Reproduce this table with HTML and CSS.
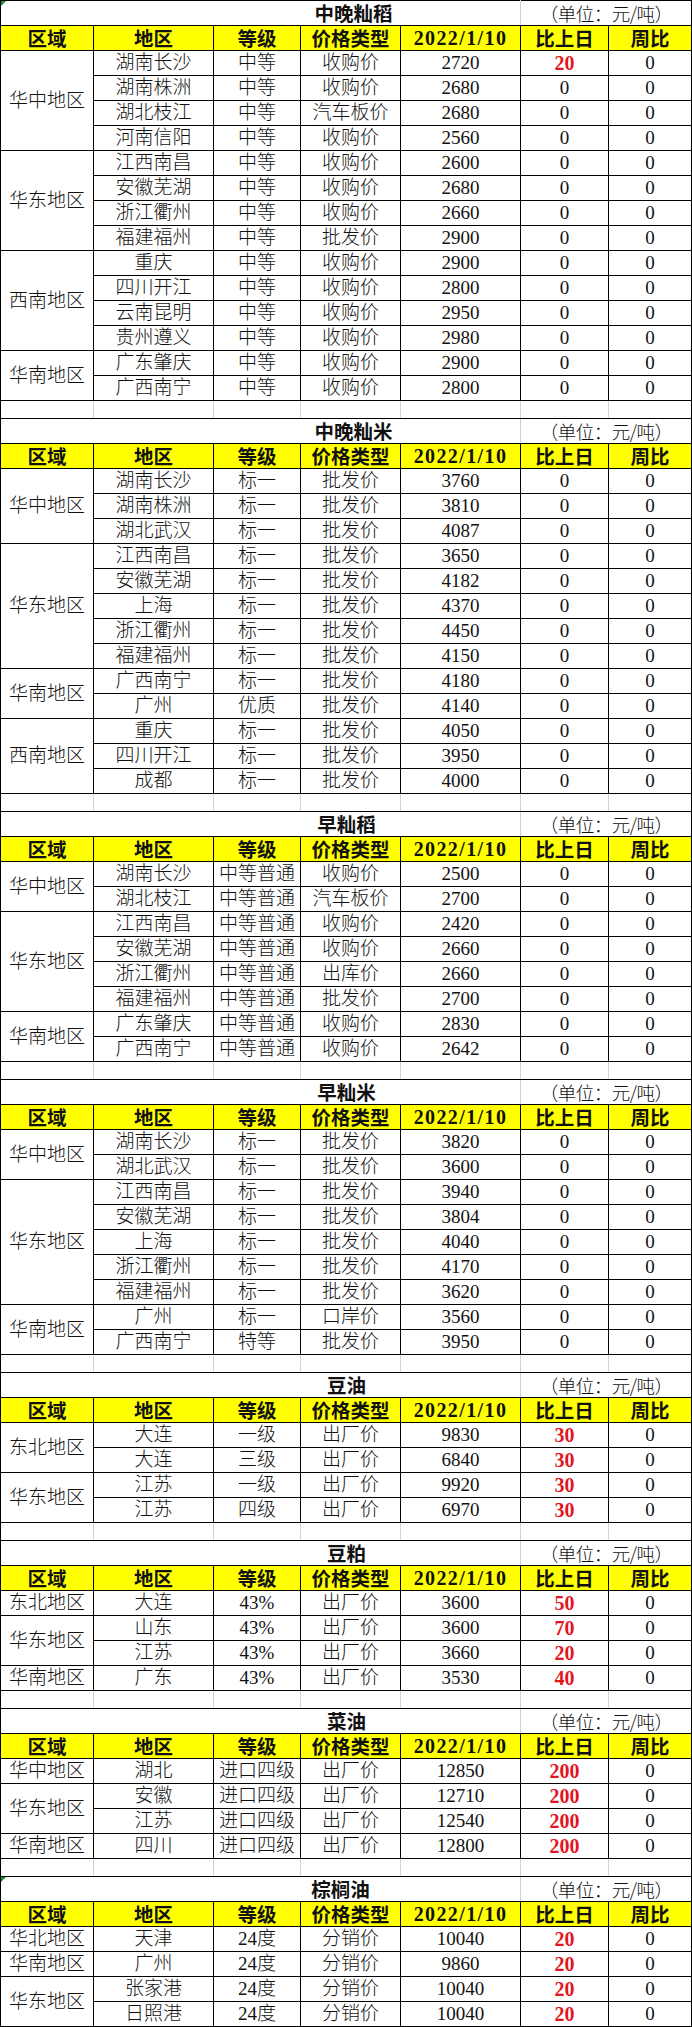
FILE: index.html
```html
<!DOCTYPE html>
<html lang="zh-CN">
<head>
<meta charset="utf-8">
<title>价格表</title>
<link rel="stylesheet" href="styles.css">
</head>
<body>
<table class="sheet">
<colgroup>
<col class="c1"><col class="c2"><col class="c3"><col class="c4"><col class="c5"><col class="c6"><col class="c7">
</colgroup>

<tbody>
<tr class="title"><td colspan="5" class="ttl ttl-wide flag">中晚籼稻</td><td colspan="2" class="unit">（单位：元/吨）</td></tr>
<tr class="hd"><td>区域</td><td>地区</td><td>等级</td><td>价格类型</td><td class="num">2022/1/10</td><td>比上日</td><td>周比</td></tr>
<tr><td rowspan="4">华中地区</td><td>湖南长沙</td><td>中等</td><td>收购价</td><td>2720</td><td class="r">20</td><td>0</td></tr>
<tr><td>湖南株洲</td><td>中等</td><td>收购价</td><td>2680</td><td>0</td><td>0</td></tr>
<tr><td>湖北枝江</td><td>中等</td><td>汽车板价</td><td>2680</td><td>0</td><td>0</td></tr>
<tr><td>河南信阳</td><td>中等</td><td>收购价</td><td>2560</td><td>0</td><td>0</td></tr>
<tr><td rowspan="4">华东地区</td><td>江西南昌</td><td>中等</td><td>收购价</td><td>2600</td><td>0</td><td>0</td></tr>
<tr><td>安徽芜湖</td><td>中等</td><td>收购价</td><td>2680</td><td>0</td><td>0</td></tr>
<tr><td>浙江衢州</td><td>中等</td><td>收购价</td><td>2660</td><td>0</td><td>0</td></tr>
<tr><td>福建福州</td><td>中等</td><td>批发价</td><td>2900</td><td>0</td><td>0</td></tr>
<tr><td rowspan="4">西南地区</td><td>重庆</td><td>中等</td><td>收购价</td><td>2900</td><td>0</td><td>0</td></tr>
<tr><td>四川开江</td><td>中等</td><td>收购价</td><td>2800</td><td>0</td><td>0</td></tr>
<tr><td>云南昆明</td><td>中等</td><td>收购价</td><td>2950</td><td>0</td><td>0</td></tr>
<tr><td>贵州遵义</td><td>中等</td><td>收购价</td><td>2980</td><td>0</td><td>0</td></tr>
<tr><td rowspan="2">华南地区</td><td>广东肇庆</td><td>中等</td><td>收购价</td><td>2900</td><td>0</td><td>0</td></tr>
<tr><td>广西南宁</td><td>中等</td><td>收购价</td><td>2800</td><td>0</td><td>0</td></tr>
<tr class="gap"><td></td><td></td><td></td><td></td><td></td><td></td><td></td></tr>
</tbody>

<tbody>
<tr class="title"><td colspan="5" class="ttl ttl-wide">中晚籼米</td><td colspan="2" class="unit">（单位：元/吨）</td></tr>
<tr class="hd"><td>区域</td><td>地区</td><td>等级</td><td>价格类型</td><td class="num">2022/1/10</td><td>比上日</td><td>周比</td></tr>
<tr><td rowspan="3">华中地区</td><td>湖南长沙</td><td>标一</td><td>批发价</td><td>3760</td><td>0</td><td>0</td></tr>
<tr><td>湖南株洲</td><td>标一</td><td>批发价</td><td>3810</td><td>0</td><td>0</td></tr>
<tr><td>湖北武汉</td><td>标一</td><td>批发价</td><td>4087</td><td>0</td><td>0</td></tr>
<tr><td rowspan="5">华东地区</td><td>江西南昌</td><td>标一</td><td>批发价</td><td>3650</td><td>0</td><td>0</td></tr>
<tr><td>安徽芜湖</td><td>标一</td><td>批发价</td><td>4182</td><td>0</td><td>0</td></tr>
<tr><td>上海</td><td>标一</td><td>批发价</td><td>4370</td><td>0</td><td>0</td></tr>
<tr><td>浙江衢州</td><td>标一</td><td>批发价</td><td>4450</td><td>0</td><td>0</td></tr>
<tr><td>福建福州</td><td>标一</td><td>批发价</td><td>4150</td><td>0</td><td>0</td></tr>
<tr><td rowspan="2">华南地区</td><td>广西南宁</td><td>标一</td><td>批发价</td><td>4180</td><td>0</td><td>0</td></tr>
<tr><td>广州</td><td>优质</td><td>批发价</td><td>4140</td><td>0</td><td>0</td></tr>
<tr><td rowspan="3">西南地区</td><td>重庆</td><td>标一</td><td>批发价</td><td>4050</td><td>0</td><td>0</td></tr>
<tr><td>四川开江</td><td>标一</td><td>批发价</td><td>3950</td><td>0</td><td>0</td></tr>
<tr><td>成都</td><td>标一</td><td>批发价</td><td>4000</td><td>0</td><td>0</td></tr>
<tr class="gap"><td></td><td></td><td></td><td></td><td></td><td></td><td></td></tr>
</tbody>

<tbody>
<tr class="title"><td colspan="5" class="ttl">早籼稻</td><td colspan="2" class="unit">（单位：元/吨）</td></tr>
<tr class="hd"><td>区域</td><td>地区</td><td>等级</td><td>价格类型</td><td class="num">2022/1/10</td><td>比上日</td><td>周比</td></tr>
<tr><td rowspan="2">华中地区</td><td>湖南长沙</td><td>中等普通</td><td>收购价</td><td>2500</td><td>0</td><td>0</td></tr>
<tr><td>湖北枝江</td><td>中等普通</td><td>汽车板价</td><td>2700</td><td>0</td><td>0</td></tr>
<tr><td rowspan="4">华东地区</td><td>江西南昌</td><td>中等普通</td><td>收购价</td><td>2420</td><td>0</td><td>0</td></tr>
<tr><td>安徽芜湖</td><td>中等普通</td><td>收购价</td><td>2660</td><td>0</td><td>0</td></tr>
<tr><td>浙江衢州</td><td>中等普通</td><td>出库价</td><td>2660</td><td>0</td><td>0</td></tr>
<tr><td>福建福州</td><td>中等普通</td><td>批发价</td><td>2700</td><td>0</td><td>0</td></tr>
<tr><td rowspan="2">华南地区</td><td>广东肇庆</td><td>中等普通</td><td>收购价</td><td>2830</td><td>0</td><td>0</td></tr>
<tr><td>广西南宁</td><td>中等普通</td><td>收购价</td><td>2642</td><td>0</td><td>0</td></tr>
<tr class="gap"><td></td><td></td><td></td><td></td><td></td><td></td><td></td></tr>
</tbody>

<tbody>
<tr class="title"><td colspan="5" class="ttl">早籼米</td><td colspan="2" class="unit">（单位：元/吨）</td></tr>
<tr class="hd"><td>区域</td><td>地区</td><td>等级</td><td>价格类型</td><td class="num">2022/1/10</td><td>比上日</td><td>周比</td></tr>
<tr><td rowspan="2">华中地区</td><td>湖南长沙</td><td>标一</td><td>批发价</td><td>3820</td><td>0</td><td>0</td></tr>
<tr><td>湖北武汉</td><td>标一</td><td>批发价</td><td>3600</td><td>0</td><td>0</td></tr>
<tr><td rowspan="5">华东地区</td><td>江西南昌</td><td>标一</td><td>批发价</td><td>3940</td><td>0</td><td>0</td></tr>
<tr><td>安徽芜湖</td><td>标一</td><td>批发价</td><td>3804</td><td>0</td><td>0</td></tr>
<tr><td>上海</td><td>标一</td><td>批发价</td><td>4040</td><td>0</td><td>0</td></tr>
<tr><td>浙江衢州</td><td>标一</td><td>批发价</td><td>4170</td><td>0</td><td>0</td></tr>
<tr><td>福建福州</td><td>标一</td><td>批发价</td><td>3620</td><td>0</td><td>0</td></tr>
<tr><td rowspan="2">华南地区</td><td>广州</td><td>标一</td><td>口岸价</td><td>3560</td><td>0</td><td>0</td></tr>
<tr><td>广西南宁</td><td>特等</td><td>批发价</td><td>3950</td><td>0</td><td>0</td></tr>
<tr class="gap"><td></td><td></td><td></td><td></td><td></td><td></td><td></td></tr>
</tbody>

<tbody>
<tr class="title"><td colspan="5" class="ttl">豆油</td><td colspan="2" class="unit">（单位：元/吨）</td></tr>
<tr class="hd"><td>区域</td><td>地区</td><td>等级</td><td>价格类型</td><td class="num">2022/1/10</td><td>比上日</td><td>周比</td></tr>
<tr><td rowspan="2">东北地区</td><td>大连</td><td>一级</td><td>出厂价</td><td>9830</td><td class="r">30</td><td>0</td></tr>
<tr><td>大连</td><td>三级</td><td>出厂价</td><td>6840</td><td class="r">30</td><td>0</td></tr>
<tr><td rowspan="2">华东地区</td><td>江苏</td><td>一级</td><td>出厂价</td><td>9920</td><td class="r">30</td><td>0</td></tr>
<tr><td>江苏</td><td>四级</td><td>出厂价</td><td>6970</td><td class="r">30</td><td>0</td></tr>
<tr class="gap"><td></td><td></td><td></td><td></td><td></td><td></td><td></td></tr>
</tbody>

<tbody>
<tr class="title"><td colspan="5" class="ttl">豆粕</td><td colspan="2" class="unit">（单位：元/吨）</td></tr>
<tr class="hd"><td>区域</td><td>地区</td><td>等级</td><td>价格类型</td><td class="num">2022/1/10</td><td>比上日</td><td>周比</td></tr>
<tr><td>东北地区</td><td>大连</td><td>43%</td><td>出厂价</td><td>3600</td><td class="r">50</td><td>0</td></tr>
<tr><td rowspan="2">华东地区</td><td>山东</td><td>43%</td><td>出厂价</td><td>3600</td><td class="r">70</td><td>0</td></tr>
<tr><td>江苏</td><td>43%</td><td>出厂价</td><td>3660</td><td class="r">20</td><td>0</td></tr>
<tr><td>华南地区</td><td>广东</td><td>43%</td><td>出厂价</td><td>3530</td><td class="r">40</td><td>0</td></tr>
<tr class="gap"><td></td><td></td><td></td><td></td><td></td><td></td><td></td></tr>
</tbody>

<tbody>
<tr class="title"><td colspan="5" class="ttl">菜油</td><td colspan="2" class="unit">（单位：元/吨）</td></tr>
<tr class="hd"><td>区域</td><td>地区</td><td>等级</td><td>价格类型</td><td class="num">2022/1/10</td><td>比上日</td><td>周比</td></tr>
<tr><td>华中地区</td><td>湖北</td><td>进口四级</td><td>出厂价</td><td>12850</td><td class="r">200</td><td>0</td></tr>
<tr><td rowspan="2">华东地区</td><td>安徽</td><td>进口四级</td><td>出厂价</td><td>12710</td><td class="r">200</td><td>0</td></tr>
<tr><td>江苏</td><td>进口四级</td><td>出厂价</td><td>12540</td><td class="r">200</td><td>0</td></tr>
<tr><td>华南地区</td><td>四川</td><td>进口四级</td><td>出厂价</td><td>12800</td><td class="r">200</td><td>0</td></tr>
<tr class="gap"><td></td><td></td><td></td><td></td><td></td><td></td><td></td></tr>
</tbody>

<tbody>
<tr class="title"><td colspan="5" class="ttl ttl-palm flag">棕榈油</td><td colspan="2" class="unit">（单位：元/吨）</td></tr>
<tr class="hd"><td>区域</td><td>地区</td><td>等级</td><td>价格类型</td><td class="num">2022/1/10</td><td>比上日</td><td>周比</td></tr>
<tr><td>华北地区</td><td>天津</td><td>24度</td><td>分销价</td><td>10040</td><td class="r">20</td><td>0</td></tr>
<tr><td>华南地区</td><td>广州</td><td>24度</td><td>分销价</td><td>9860</td><td class="r">20</td><td>0</td></tr>
<tr><td rowspan="2">华东地区</td><td>张家港</td><td>24度</td><td>分销价</td><td>10040</td><td class="r">20</td><td>0</td></tr>
<tr><td>日照港</td><td>24度</td><td>分销价</td><td>10040</td><td class="r">20</td><td>0</td></tr>
</tbody>
</table>
</body>
</html>
```
FILE: styles.css
```css
html, body {
  margin: 0;
  padding: 0;
  background: #ffffff;
}

.sheet {
  border-collapse: collapse;
  table-layout: fixed;
  width: 691px;
  font-family: "Liberation Serif", "Noto Sans CJK SC", serif;
  color: #111111;
}

.c1 { width: 93px; }
.c2 { width: 120px; }
.c3 { width: 87px; }
.c4 { width: 100px; }
.c5 { width: 120px; }
.c6 { width: 88px; }
.c7 { width: 83px; }

.sheet tr {
  height: 25px;
}

.sheet td {
  border: 1px solid #000000;
  padding: 0;
  text-align: center;
  vertical-align: middle;
  font-size: 19px;
  font-weight: 300;
  line-height: 22px;
  white-space: nowrap;
}

/* header row */
.hd td {
  background: #ffff00;
  font-weight: 700;
  font-size: 19.5px;
  font-family: "Noto Sans CJK SC", sans-serif;
}

.hd td.num {
  font-family: "Liberation Serif", serif;
  font-size: 20px;
  letter-spacing: 1.4px;
}

/* title row */
.title td {
  border-bottom-color: #000000;
}

.title .ttl {
  border-right: 1px solid #d0d0d0;
  font-family: "Noto Sans CJK SC", sans-serif;
  font-weight: 700;
  font-size: 19.5px;
  padding-left: 172px;
}

.title .ttl-wide {
  padding-left: 186px;
}

.title .ttl-palm {
  padding-left: 160px;
}

.title .unit {
  border-left: 1px solid #d0d0d0;
  font-family: "Noto Sans CJK SC", sans-serif;
  font-size: 18.5px;
  letter-spacing: -0.5px;
}

/* red change values */
.sheet td.r {
  color: #e3161f;
  font-weight: 700;
  font-size: 20px;
}

/* spacer rows between sections */
.sheet tr.gap {
  height: 18px;
}

.gap td {
  border-left-color: #d4d4d4;
  border-right-color: #d4d4d4;
}

.gap td:first-child {
  border-left-color: #000000;
}

.gap td:last-child {
  border-right-color: #000000;
}

/* spreadsheet green error marker */
.flag {
  position: relative;
}

.flag::before {
  content: "";
  position: absolute;
  left: 0;
  top: 0;
  width: 0;
  height: 0;
  border-top: 5px solid #1e8a3a;
  border-right: 5px solid transparent;
}
```
